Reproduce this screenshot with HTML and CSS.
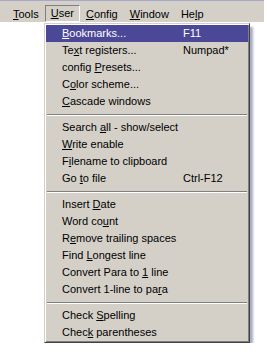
FILE: index.html
```html
<!DOCTYPE html>
<html lang="en">
<head>
    <meta charset="UTF-8">
    <title>User menu</title>
    <link rel="stylesheet" href="styles.css">
</head>
<body>

<div class="menubar">
    <span class="bar-item"><u>T</u>ools</span>
    <span class="bar-item open"><u>U</u>ser</span>
    <span class="bar-item"><u>C</u>onfig</span>
    <span class="bar-item"><u>W</u>indow</span>
    <span class="bar-item">He<u>l</u>p</span>
</div>

<div class="dropdown">
    <div class="item active"><span><u>B</u>ookmarks...</span><span>F11</span></div>
    <div class="item"><span>Te<u>x</u>t registers...</span><span>Numpad*</span></div>
    <div class="item"><span>config <u>P</u>resets...</span><span></span></div>
    <div class="item"><span>C<u>o</u>lor scheme...</span><span></span></div>
    <div class="item"><span><u>C</u>ascade windows</span><span></span></div>
    <div class="sep"></div>
    <div class="item"><span>Search <u>a</u>ll - show/select</span><span></span></div>
    <div class="item"><span><u>W</u>rite enable</span><span></span></div>
    <div class="item"><span>F<u>i</u>lename to clipboard</span><span></span></div>
    <div class="item"><span>Go <u>t</u>o file</span><span>Ctrl-F12</span></div>
    <div class="sep"></div>
    <div class="item"><span>Insert <u>D</u>ate</span><span></span></div>
    <div class="item"><span>Word co<u>u</u>nt</span><span></span></div>
    <div class="item"><span>R<u>e</u>move trailing spaces</span><span></span></div>
    <div class="item"><span>Find <u>L</u>ongest line</span><span></span></div>
    <div class="item"><span>Convert Para to <u>1</u> line</span><span></span></div>
    <div class="item"><span>Convert 1-line to pa<u>r</u>a</span><span></span></div>
    <div class="sep"></div>
    <div class="item"><span>Check <u>S</u>pelling</span><span></span></div>
    <div class="item"><span>Chec<u>k</u> parentheses</span><span></span></div>
</div>

</body>
</html>
```

FILE: styles.css
```css
body {
    margin: 0;
    background: #ffffff;
    font-family: "Liberation Sans", Arial, sans-serif;
    font-size: 11px;
    color: #000000;
}
u {
    text-underline-offset: 1px;
}
.menubar {
    display: flex;
    align-items: flex-end;
    height: 21px;
    padding-left: 7px;
    background: #d4d0c8;
    border-top: 1px solid #a8a8c8;
    border-bottom: 1px solid #ffffff;
    width: 257px;
}
.bar-item {
    height: 15px;
    line-height: 15px;
    padding: 0 5px;
    border: 1px solid transparent;
    border-bottom: none;
}
.bar-item.open {
    border-color: #808080 #ffffff #ffffff #808080;
    border-style: solid;
    border-width: 1px;
    height: 15px;
}
.dropdown {
    margin-left: 44px;
    width: 202px;
    padding: 1px;
    background: #d4d0c8;
    border-style: solid;
    border-width: 1px;
    border-color: #d4d0c8 #404040 #404040 #d4d0c8;
    box-shadow: inset 1px 1px 0 #ffffff, inset -1px -1px 0 #808080, 3px 4px 2px rgba(70, 70, 130, 0.45);
}
.item {
    display: grid;
    grid-template-columns: 121px 1fr;
    height: 17px;
    line-height: 17px;
    padding-left: 16px;
    white-space: nowrap;
}
.item.active {
    background: #4c4898;
    color: #ffffff;
}
.sep {
    height: 0;
    margin: 4px 1px 3px;
    border-top: 1px solid #808080;
    border-bottom: 1px solid #ffffff;
}
```
